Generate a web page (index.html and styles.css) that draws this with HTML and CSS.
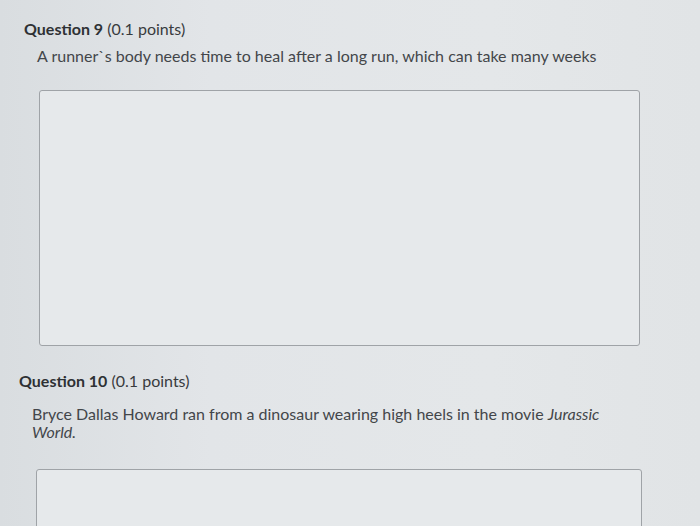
FILE: index.html
```html
<!DOCTYPE html>
<html>
<head>
<meta charset="utf-8">
<link rel="stylesheet" href="styles.css">
</head>
<body>
<div class="page">
  <section class="question q9">
    <h2 class="q-title"><strong>Question 9</strong> (0.1 points)</h2>
    <p class="q-text">A runner`s body needs time to heal after a long run, which can take many weeks</p>
    <div class="answer answer-9"></div>
  </section>
  <section class="question q10">
    <h2 class="q-title"><strong>Question 10</strong> (0.1 points)</h2>
    <p class="q-text q-text-10">Bryce Dallas Howard ran from a dinosaur wearing high heels in the movie <em>Jurassic</em> <em>World.</em></p>
    <div class="answer answer-10"></div>
  </section>
</div>
</body>
</html>
```
FILE: styles.css
```css
html, body {
  margin: 0;
  padding: 0;
  height: 100%;
  overflow: hidden;
}
body {
  font-family: Lato, "Open Sans", sans-serif;
  background: linear-gradient(90deg, #d9dde0 0%, #e2e5e8 30%, #e4e7e9 70%, #e1e4e6 100%);
  color: #3d4043;
}
.page {
  display: flex;
  flex-direction: column;
}
.question {
  display: flex;
  flex-direction: column;
}
.q9 {
  padding: 19px 60px 0 24px;
}
.q10 {
  padding: 25px 58px 0 19px;
}
.q-title {
  margin: 0;
  font-size: 16px;
  font-weight: 400;
  line-height: 20px;
  color: #383b3e;
}
.q-title strong {
  font-weight: 700;
  color: #2e3134;
}
.q-text {
  margin: 8px 0 0 13px;
  font-size: 16px;
  line-height: 18px;
  color: #43464a;
}
.q-text-10 {
  margin-top: 14px;
}
.q-text em {
  font-style: italic;
}
.answer {
  border: 1px solid #9fa3a7;
  border-radius: 3px;
  background: #e6e9eb;
}
.answer-9 {
  margin: 25px 0 0 15px;
  height: 254px;
}
.answer-10 {
  margin: 28px 0 0 17px;
  height: 120px;
}
```
